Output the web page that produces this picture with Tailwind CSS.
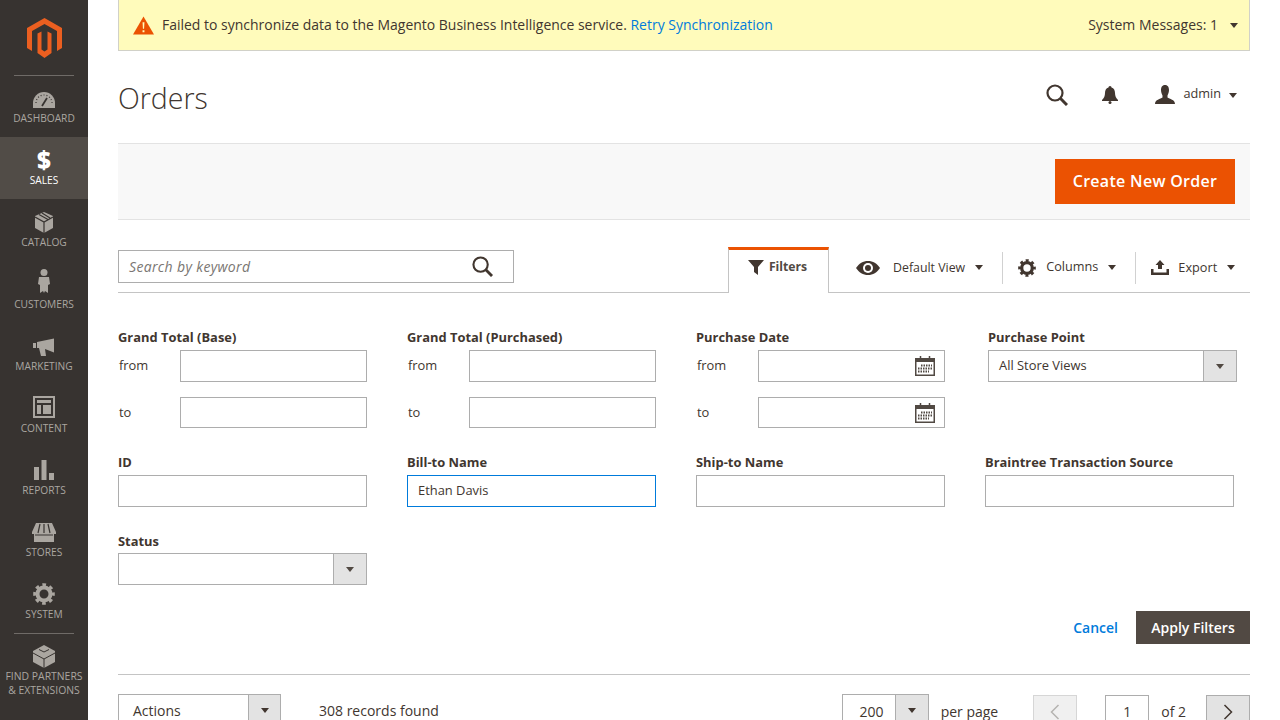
<!DOCTYPE html>
<html lang="en">
<head>
    <meta charset="UTF-8">
    <title>Orders</title>
    <script src="https://cdn.jsdelivr.net/npm/@tailwindcss/browser@4"></script>
</head>
<body class="bg-white">
<div class="flex h-[720px] w-[1280px] overflow-hidden font-['Open_Sans',sans-serif] text-[#41362f]">

    <!-- Sidebar -->
    <nav class="w-[88px] shrink-0 bg-[#373330] text-[#aaa6a0] text-[10.2px] leading-[14px]">
        <div class="h-[75px] flex justify-center items-start pt-[18px] pl-px">
            <svg width="36" height="41" viewBox="0 0 36 41" class="text-[#eb5f20]" fill="currentColor">
                <path d="M17.5 0L35 10V30L30 33V13L17.5 6L5 13V33L0 30V10Z"/>
                <path d="M10.5 15.5L14.5 13.5V31.5L17.5 33.5L20.5 31.5V13.5L24.5 15.5V35L17.5 40L10.5 35Z"/>
            </svg>
        </div>
        <div class="mx-[14px] h-px bg-[#6f6b67]"></div>

        <a class="h-[61px] flex flex-col items-center">
            <svg class="mt-[16px] mb-[3px]" width="22" height="16" viewBox="0 0 22 16">
                <path fill="currentColor" d="M0 16V11A11 11 0 0 1 22 11V16Z"/>
                <path stroke="#373330" stroke-width="1.2" stroke-dasharray="1 2" fill="none" d="M3 11A8 8 0 0 1 19 11"/>
                <path stroke="#373330" stroke-width="1.8" d="M9 14L14 6"/>
            </svg>
            <span>DASHBOARD</span>
        </a>
        <a class="h-[62px] flex flex-col items-center bg-[#514c47] text-white">
            <span class="mt-[10px] h-[26px] text-[24px] leading-[26px] font-extrabold">$</span>
            <span>SALES</span>
        </a>
        <a class="h-[62px] flex flex-col items-center">
            <svg class="mt-[13px] mb-[2px]" width="18" height="21" viewBox="0 0 18 21">
                <path fill="currentColor" d="M9 0L18 4V16L9 21L0 16V4Z"/>
                <path stroke="#373330" stroke-width="1.2" fill="none" d="M0 5L9 10L18 5M9 10V21M4 2.5L13 7.5M7 1L15 6"/>
            </svg>
            <span>CATALOG</span>
        </a>
        <a class="h-[62px] flex flex-col items-center">
            <svg class="mt-[8px] mb-[4px]" width="12" height="24" viewBox="0 0 12 24">
                <circle cx="6" cy="3.5" r="3.5" fill="currentColor"/>
                <path fill="currentColor" d="M1 8H11L12 15L10 16V24L7 22L6 24L5 22L2 24V16L0 15Z"/>
            </svg>
            <span>CUSTOMERS</span>
        </a>
        <a class="h-[62px] flex flex-col items-center">
            <svg class="mt-[15px] mb-[3px]" width="22" height="18" viewBox="0 0 22 18">
                <path fill="currentColor" d="M0 5H3V10H0ZM4 4L21 0.5V14.5L12 11L13 18H8L6 10H4Z"/>
            </svg>
            <span>MARKETING</span>
        </a>
        <a class="h-[62px] flex flex-col items-center">
            <svg class="mt-[11px] mb-[3px]" width="22" height="22" viewBox="0 0 22 22">
                <path fill="currentColor" fill-rule="evenodd" d="M0 0H22V22H0ZM2 2V20H20V2Z"/>
                <path fill="currentColor" d="M4 4H18V7H4ZM4 9H8V18H4ZM10 9H18V18H10Z"/>
            </svg>
            <span>CONTENT</span>
        </a>
        <a class="h-[62px] flex flex-col items-center">
            <svg class="mt-[13px] mb-[3px]" width="20" height="20" viewBox="0 0 20 20">
                <path fill="currentColor" d="M0 7H5V20H0ZM7.5 0H12.5V20H7.5ZM15 13H20V20H15Z"/>
            </svg>
            <span>REPORTS</span>
        </a>
        <a class="h-[62px] flex flex-col items-center">
            <svg class="mt-[14px] mb-[3px]" width="24" height="19" viewBox="0 0 24 19">
                <path fill="currentColor" d="M4 0H20L24 9V11H0V9ZM2 11H22V19H2Z"/>
                <path stroke="#373330" stroke-width="1.2" fill="none" d="M8 1L6 10M12 1V10M16 1L18 10M3 12H21"/>
            </svg>
            <span>STORES</span>
        </a>
        <a class="h-[62px] flex flex-col items-center">
            <svg class="mt-[12px] mb-[2px]" width="22" height="22" viewBox="0 0 22 22">
                <circle cx="11" cy="11" r="6.5" fill="none" stroke="currentColor" stroke-width="4"/>
                <circle cx="11" cy="11" r="9" fill="none" stroke="currentColor" stroke-width="3.6" stroke-dasharray="3.53 3.53" stroke-dashoffset="1.77"/>
            </svg>
            <span>SYSTEM</span>
        </a>
        <div class="mx-[14px] h-px bg-[#6f6b67]"></div>
        <a class="flex flex-col items-center text-center text-[10.4px]">
            <svg class="mt-[11px] mb-[1px]" width="22" height="23" viewBox="0 0 22 23">
                <path fill="currentColor" d="M11 0L22 6V17L11 23L0 17V6Z"/>
                <path stroke="#373330" stroke-width="1" fill="none" d="M0 8L11 14L22 8M11 14V23M6 4.5L11 7L16 4.5"/>
            </svg>
            <span>FIND PARTNERS<br>&amp; EXTENSIONS</span>
        </a>
    </nav>

    <!-- Main -->
    <main class="w-[1132px] ml-[30px] text-[13px]">
        <!-- System message -->
        <div class="h-[51px] flex items-center justify-between bg-[#fffbbb] border border-t-0 border-[#d1d1c8] pl-[14px] pr-[11px] text-[14px] text-[#41362f]">
            <div class="flex items-center">
                <svg class="mr-[8px]" width="21" height="19" viewBox="0 0 22 19">
                    <path fill="#eb5202" d="M11 0L22 19H0Z"/>
                    <path fill="#fffbbb" d="M10 6H12L11.6 13H10.4ZM10 14.5H12V16.5H10Z"/>
                </svg>
                <span class="text-[13.98px]">Failed to synchronize data to the Magento Business Intelligence service. <a class="text-[#007bdb]">Retry Synchronization</a></span>
            </div>
            <div class="flex items-center">
                <span class="mb-[1px]">System Messages: 1</span>
                <span class="ml-[12px] w-0 h-0 border-x-[4.5px] border-x-transparent border-t-[5px] border-t-[#41362f]"></span>
            </div>
        </div>

        <!-- Page header -->
        <div class="h-[92px] flex items-center justify-between">
            <h1 class="text-[28.5px] font-light leading-none mt-[2px]">Orders</h1>
            <div class="flex items-center mr-[13px] mb-[4px]">
                <svg width="22" height="22" viewBox="0 0 22 22" fill="none" stroke="#41362f" stroke-width="2.2">
                    <circle cx="9" cy="9" r="7.5"/>
                    <path stroke-width="3" d="M14.5 14.5L21 21"/>
                </svg>
                <svg class="ml-[34px]" width="16" height="18" viewBox="0 0 16 18" fill="#41362f">
                    <path d="M8 0C9 0 9.5 .8 9.5 1.5C12 2.3 13 4.5 13 7C13 10 14 12 16 14V15H0V14C2 12 3 10 3 7C3 4.5 4 2.3 6.500 1.500C6.500 .8 7 0 8 0Z"/>
                    <circle cx="8" cy="16.5" r="1.5"/>
                </svg>
                <svg class="ml-[37px] mb-[1px]" width="20" height="19" viewBox="0 0 20 19" fill="#41362f">
                    <path d="M10 0C13 0 14 2.5 14 5C14 7.5 13 9.5 12.5 10.5V12.5C14.5 14 20 14.5 20 19H0C0 14.5 5.5 14 7.5 12.5V10.5C7 9.5 6 7.5 6 5C6 2.5 7 0 10 0Z"/>
                </svg>
                <span class="ml-[8px] mb-[2px] text-[12.7px]">admin</span>
                <span class="ml-[8px] w-0 h-0 border-x-[4.5px] border-x-transparent border-t-[5px] border-t-[#41362f]"></span>
            </div>
        </div>

        <!-- Page actions -->
        <div class="h-[77px] flex items-center justify-end bg-[#f8f8f8] border-y border-[#e3e3e3] pr-[15px]">
            <button class="w-[180px] h-[45px] pb-[2px] bg-[#eb5202] text-white text-[16px] font-semibold tracking-[0.3px]">Create New Order</button>
        </div>

        <!-- Toolbar -->
        <div class="mt-[27px] h-[46px] flex items-start border-b border-[#c4c4c4]">
            <div class="mt-[3px] w-[396px] h-[33px] flex items-center justify-between border border-[#adadad] pl-[10px] pr-[20px]">
                <span class="italic text-[14px] tracking-[0.35px] text-[#7a7672]">Search by keyword</span>
                <svg width="21" height="21" viewBox="0 0 22 22" fill="none" stroke="#41362f" stroke-width="2.2">
                    <circle cx="9" cy="9" r="7.5"/>
                    <path stroke-width="3" d="M14.5 14.5L21 21"/>
                </svg>
            </div>
            <div class="ml-[214px] w-[101px] h-[46px] pb-[9px] pr-[2px] flex items-center justify-center bg-white border-x border-[#c4c4c4] border-t-[3px] border-t-[#eb5202] font-bold text-[12.2px] text-[#514943]">
                <svg class="mr-[5px]" width="16" height="16" viewBox="0 0 16 16" fill="#41362f">
                    <path d="M0 1H16L10 8V16L6 13V8Z"/>
                </svg>
                <span>Filters</span>
            </div>
            <div class="ml-[27px] mt-[3px] h-[35px] flex items-center">
                <svg width="24" height="14" viewBox="0 0 24 14">
                    <path fill="#41362f" d="M0 7C3 2.500 7 0 12 0C17 0 21 2.500 24 7C21 11.500 17 14 12 14C7 14 3 11.500 0 7Z"/>
                    <circle cx="12" cy="7" r="5" fill="#fff"/>
                    <circle cx="12" cy="7" r="3" fill="#41362f"/>
                </svg>
                <span class="ml-[13px] mt-[1px] text-[12.35px]">Default View</span>
                <span class="ml-[10px] w-0 h-0 border-x-[4.5px] border-x-transparent border-t-[5px] border-t-[#41362f]"></span>
                <span class="ml-[19px] w-px h-[32px] bg-[#d1d1d1]"></span>
                <svg class="ml-[15px]" width="18" height="18" viewBox="0 0 22 22">
                    <circle cx="11" cy="11" r="6.5" fill="none" stroke="#41362f" stroke-width="4"/>
                    <circle cx="11" cy="11" r="9" fill="none" stroke="#41362f" stroke-width="3.6" stroke-dasharray="3.53 3.53" stroke-dashoffset="1.77"/>
                </svg>
                <span class="ml-[10px] mb-[1px] text-[12.7px]">Columns</span>
                <span class="ml-[10px] w-0 h-0 border-x-[4.5px] border-x-transparent border-t-[5px] border-t-[#41362f]"></span>
                <span class="ml-[19px] w-px h-[32px] bg-[#d1d1d1]"></span>
                <svg class="ml-[15px]" width="18" height="15" viewBox="0 0 18 15" fill="#41362f">
                    <path d="M9 0L13.500 5H11V9H7V5H4.500ZM0 9H2.500V12.500H15.500V9H18V15H0Z"/>
                </svg>
                <span class="ml-[9px] text-[12.7px]">Export</span>
                <span class="ml-[10px] w-0 h-0 border-x-[4.5px] border-x-transparent border-t-[5px] border-t-[#41362f]"></span>
            </div>
        </div>

        <!-- Filters, row 1 -->
        <div class="mt-[35px] flex gap-[40px] text-[12.9px]">
            <div class="w-[249px]">
                <label class="block h-[18px] leading-[18px] mb-[4px] font-bold">Grand Total (Base)</label>
                <div class="flex items-center justify-between">
                    <span class="pl-px">from</span>
                    <div class="w-[187px] h-[32px] border border-[#adadad]"></div>
                </div>
                <div class="flex items-center justify-between mt-[15px]">
                    <span class="pl-px">to</span>
                    <div class="w-[187px] h-[31px] border border-[#adadad]"></div>
                </div>
            </div>
            <div class="w-[249px]">
                <label class="block h-[18px] leading-[18px] mb-[4px] font-bold">Grand Total (Purchased)</label>
                <div class="flex items-center justify-between">
                    <span class="pl-px">from</span>
                    <div class="w-[187px] h-[32px] border border-[#adadad]"></div>
                </div>
                <div class="flex items-center justify-between mt-[15px]">
                    <span class="pl-px">to</span>
                    <div class="w-[187px] h-[31px] border border-[#adadad]"></div>
                </div>
            </div>
            <div class="w-[249px]">
                <label class="block h-[18px] leading-[18px] mb-[4px] font-bold">Purchase Date</label>
                <div class="flex items-center justify-between">
                    <span class="pl-px">from</span>
                    <div class="w-[187px] h-[32px] border border-[#adadad] flex items-center justify-end pr-[9px]">
                        <svg width="20" height="20" viewBox="0 0 20 20">
                            <rect x=".75" y="2.750" width="18.500" height="16.500" fill="#fff" stroke="#514943" stroke-width="1.500"/>
                            <rect x="1" y="3" width="18" height="3" fill="#514943"/>
                            <path stroke="#514943" stroke-width="1.500" d="M5.500 0V4M14.500 0V4"/>
                            <path stroke="#514943" stroke-width="2" stroke-dasharray="1.500 1" d="M6 9.500H17M3 12.500H17M3 15.500H14"/>
                        </svg>
                    </div>
                </div>
                <div class="flex items-center justify-between mt-[15px]">
                    <span class="pl-px">to</span>
                    <div class="w-[187px] h-[31px] border border-[#adadad] flex items-center justify-end pr-[9px]">
                        <svg width="20" height="20" viewBox="0 0 20 20">
                            <rect x=".75" y="2.750" width="18.500" height="16.500" fill="#fff" stroke="#514943" stroke-width="1.500"/>
                            <rect x="1" y="3" width="18" height="3" fill="#514943"/>
                            <path stroke="#514943" stroke-width="1.500" d="M5.500 0V4M14.500 0V4"/>
                            <path stroke="#514943" stroke-width="2" stroke-dasharray="1.500 1" d="M6 9.500H17M3 12.500H17M3 15.500H14"/>
                        </svg>
                    </div>
                </div>
            </div>
            <div class="w-[249px] ml-[3px]">
                <label class="block h-[18px] leading-[18px] mb-[4px] font-bold">Purchase Point</label>
                <div class="h-[32px] flex border border-[#adadad]">
                    <span class="flex-1 pl-[10px] leading-[28px]">All Store Views</span>
                    <span class="w-[33px] flex items-center justify-center bg-[#e3e3e3] border-l border-[#adadad]">
                        <span class="w-0 h-0 border-x-[4.5px] border-x-transparent border-t-[5px] border-t-[#514943]"></span>
                    </span>
                </div>
            </div>
        </div>

        <!-- Filters, row 2 -->
        <div class="mt-[25px] flex gap-[40px] text-[12.9px]">
            <div class="w-[249px]">
                <label class="block h-[18px] leading-[18px] mb-[4px] font-bold">ID</label>
                <div class="h-[32px] border border-[#adadad]"></div>
            </div>
            <div class="w-[249px]">
                <label class="block h-[18px] leading-[18px] mb-[4px] font-bold">Bill-to Name</label>
                <div class="h-[32px] border border-[#007bdb] pl-[10px] leading-[28px]">Ethan Davis</div>
            </div>
            <div class="w-[249px]">
                <label class="block h-[18px] leading-[18px] mb-[4px] font-bold">Ship-to Name</label>
                <div class="h-[32px] border border-[#adadad]"></div>
            </div>
            <div class="w-[249px]">
                <label class="block h-[18px] leading-[18px] mb-[4px] font-bold">Braintree Transaction Source</label>
                <div class="h-[32px] border border-[#adadad]"></div>
            </div>
        </div>

        <!-- Filters, row 3 -->
        <div class="mt-[25px] w-[249px] text-[12.9px]">
            <label class="block h-[18px] leading-[18px] mb-[3px] font-bold">Status</label>
            <div class="h-[32px] flex border border-[#adadad]">
                <span class="flex-1"></span>
                <span class="w-[33px] flex items-center justify-center bg-[#e3e3e3] border-l border-[#adadad]">
                    <span class="w-0 h-0 border-x-[4.5px] border-x-transparent border-t-[5px] border-t-[#514943]"></span>
                </span>
            </div>
        </div>

        <!-- Filter actions -->
        <div class="mt-[26px] flex items-center justify-end">
            <a class="text-[#007bdb] text-[14px] font-semibold mr-[18px]">Cancel</a>
            <button class="w-[114px] h-[33px] bg-[#514943] text-white text-[14px] font-semibold">Apply Filters</button>
        </div>

        <div class="mt-[30px] h-px bg-[#c4c4c4]"></div>

        <!-- Grid toolbar -->
        <div class="mt-[19px] flex items-start text-[14px]">
            <div class="w-[163px] h-[33px] flex border border-[#adadad]">
                <span class="flex-1 pl-[14px] leading-[31px]">Actions</span>
                <span class="w-[32px] flex items-center justify-center bg-[#e3e3e3] border-l border-[#adadad]">
                    <span class="w-0 h-0 border-x-[4.5px] border-x-transparent border-t-[5px] border-t-[#41362f]"></span>
                </span>
            </div>
            <span class="ml-[38px] leading-[33px]">308 records found</span>
            <div class="ml-[auto] w-[87px] h-[33px] flex border border-[#adadad]">
                <span class="flex-1 pl-[6px] text-center leading-[33px]">200</span>
                <span class="w-[33px] flex items-center justify-center bg-[#e3e3e3] border-l border-[#adadad]">
                    <span class="w-0 h-0 border-x-[4.5px] border-x-transparent border-t-[5px] border-t-[#41362f]"></span>
                </span>
            </div>
            <span class="ml-[12px] leading-[35px]">per page</span>
            <div class="ml-[35px] mt-px w-[44px] h-[33px] flex items-center justify-center bg-[#f0f0f0] border border-[#d6d6d6]">
                <svg width="10" height="16" viewBox="0 0 10 16" fill="none" stroke="#b5b3b0" stroke-width="1.500"><path d="M8.500 1L1.500 8L8.500 15"/></svg>
            </div>
            <div class="ml-[28px] mt-px w-[44px] h-[33px] border border-[#adadad] text-center leading-[31px]">1</div>
            <span class="ml-[12px] leading-[35px]">of 2</span>
            <div class="ml-[20px] mt-px w-[44px] h-[33px] flex items-center justify-center bg-[#e3e3e3] border border-[#adadad]">
                <svg width="10" height="16" viewBox="0 0 10 16" fill="none" stroke="#41362f" stroke-width="1.500"><path d="M1.500 1L8.500 8L1.500 15"/></svg>
            </div>
        </div>
    </main>
</div>
</body>
</html>
